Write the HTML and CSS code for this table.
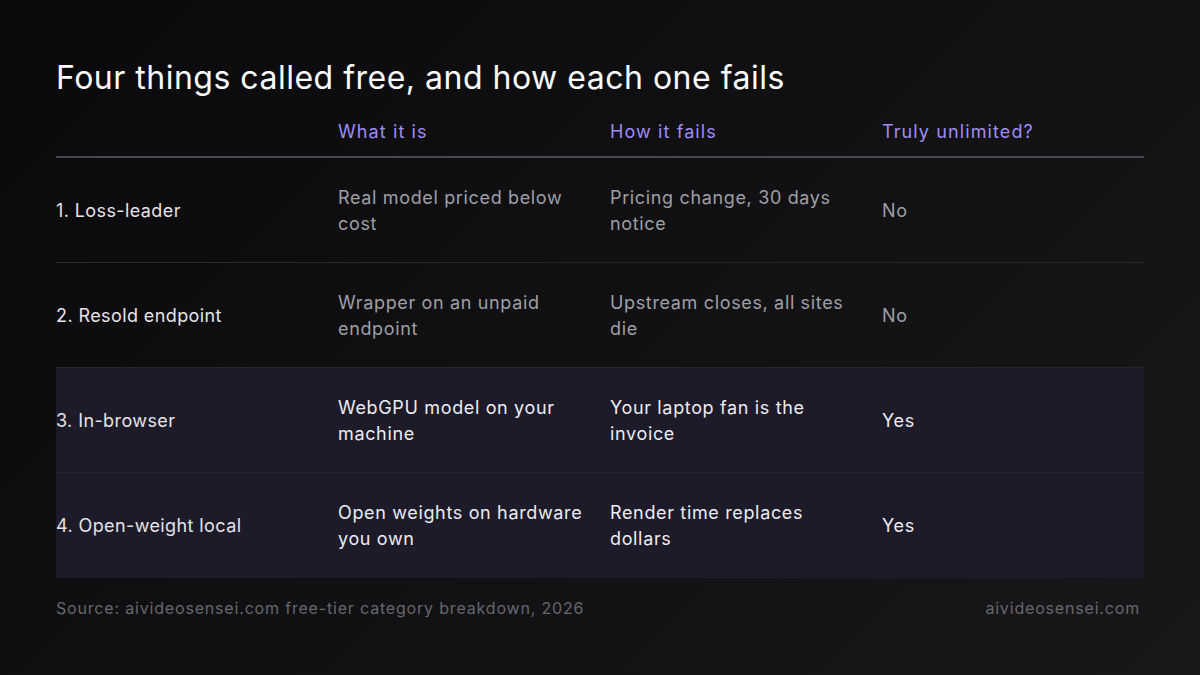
FILE: index.html
```html
<!DOCTYPE html>
<html lang="en">
<head>
<meta charset="utf-8">
<link rel="stylesheet" href="styles.css">
</head>
<body>
<main class="slide">
  <h1 class="title">Four things called free, and how each one fails</h1>
  <div class="table">
    <div class="row head">
      <div class="cell"></div>
      <div class="cell">What it is</div>
      <div class="cell">How it fails</div>
      <div class="cell">Truly unlimited?</div>
    </div>
    <div class="row">
      <div class="cell name">1. Loss-leader</div>
      <div class="cell">Real model priced below cost</div>
      <div class="cell">Pricing change, 30 days notice</div>
      <div class="cell">No</div>
    </div>
    <div class="row">
      <div class="cell name">2. Resold endpoint</div>
      <div class="cell">Wrapper on an unpaid endpoint</div>
      <div class="cell">Upstream closes, all sites die</div>
      <div class="cell">No</div>
    </div>
    <div class="row hl">
      <div class="cell name">3. In-browser</div>
      <div class="cell">WebGPU model on your machine</div>
      <div class="cell">Your laptop fan is the invoice</div>
      <div class="cell">Yes</div>
    </div>
    <div class="row hl">
      <div class="cell name">4. Open-weight local</div>
      <div class="cell">Open weights on hardware you own</div>
      <div class="cell">Render time replaces dollars</div>
      <div class="cell">Yes</div>
    </div>
  </div>
  <footer class="foot">
    <span>Source: aivideosensei.com free-tier category breakdown, 2026</span>
    <span>aivideosensei.com</span>
  </footer>
</main>
</body>
</html>
```
FILE: styles.css
```css
html, body {
  margin: 0;
  padding: 0;
}
body {
  width: 1200px;
  height: 675px;
  overflow: hidden;
  background: linear-gradient(135deg, #0a0a0c 0%, #111114 50%, #18181b 100%);
  font-family: Inter, "Noto Sans", sans-serif;
  color: #e4e4e7;
}
.slide {
  padding: 56px 56px 0 56px;
  display: flex;
  flex-direction: column;
}
.title {
  margin: 0;
  font-size: 32px;
  line-height: 44px;
  font-weight: 400;
  color: #fafafa;
  letter-spacing: 0.5px;
}
.table {
  margin-top: 13px;
  display: flex;
  flex-direction: column;
}
.row {
  display: grid;
  grid-template-columns: 282px 272px 272px 1fr;
  align-items: center;
  border-bottom: 1px solid #27272b;
  padding: 27px 0 25px 0;
  font-size: 18px;
  line-height: 26px;
  letter-spacing: 0.65px;
  color: #9f9fa6;
}
.row .cell {
  padding-right: 24px;
}
.row .name {
  color: #e4e4e7;
  letter-spacing: 0.4px;
}
.row.head {
  padding: 6px 0 11px 0;
  border-bottom: 2px solid #48484f;
  color: #a08cf5;
  letter-spacing: 1.1px;
}
.row.hl {
  background: #1d1b2a;
  color: #ececf0;
}
.row.hl:last-child {
  border-bottom: none;
  padding-bottom: 26px;
}
.foot {
  margin-top: 18px;
  display: flex;
  justify-content: space-between;
  font-size: 16px;
  line-height: 24px;
  letter-spacing: 0.82px;
  color: #67676e;
  padding-right: 4px;
}
```
